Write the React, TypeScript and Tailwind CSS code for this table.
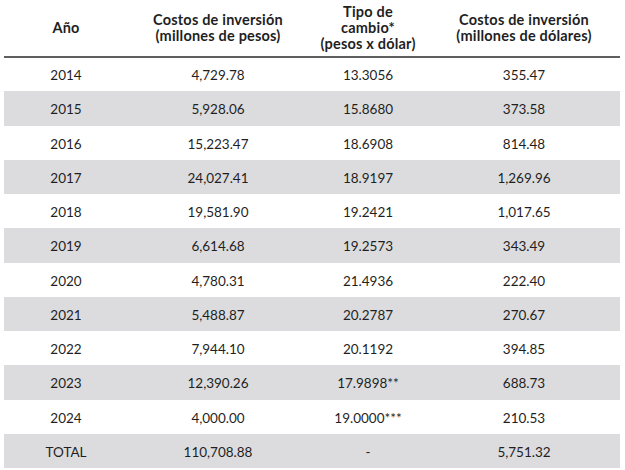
import React from 'react'

const rows: [string, string, string, string][] = [
  ['2014', '4,729.78', '13.3056', '355.47'],
  ['2015', '5,928.06', '15.8680', '373.58'],
  ['2016', '15,223.47', '18.6908', '814.48'],
  ['2017', '24,027.41', '18.9197', '1,269.96'],
  ['2018', '19,581.90', '19.2421', '1,017.65'],
  ['2019', '6,614.68', '19.2573', '343.49'],
  ['2020', '4,780.31', '21.4936', '222.40'],
  ['2021', '5,488.87', '20.2787', '270.67'],
  ['2022', '7,944.10', '20.1192', '394.85'],
  ['2023', '12,390.26', '17.9898**', '688.73'],
  ['2024', '4,000.00', '19.0000***', '210.53'],
  ['TOTAL', '110,708.88', '-', '5,751.32'],
]

export default function App() {
  return (
    <div className="w-[625px] h-[470px] bg-white pl-[4px] pr-[5px] font-['Lato',sans-serif] text-[#1f1f1f]">
      <table className="w-full border-collapse table-fixed">
        <colgroup>
          <col className="w-[124px]" />
          <col className="w-[180px]" />
          <col className="w-[120px]" />
          <col />
        </colgroup>
        <thead>
          <tr className="h-[57px] border-b-2 border-[#5f5f5f] text-[14.5px] font-bold leading-[16px] tracking-[0.2px]">
            <th className="text-center align-middle">Año</th>
            <th className="text-center align-middle">
              Costos de inversión
              <br />
              (millones de pesos)
            </th>
            <th className="text-center align-middle">
              Tipo de
              <br />
              cambio*
              <br />
              (pesos x dólar)
            </th>
            <th className="text-center align-middle">
              Costos de inversión
              <br />
              (millones de dólares)
            </th>
          </tr>
        </thead>
        <tbody className="text-[13.5px]">
          {rows.map((r, i) => (
            <tr
              key={r[0]}
              className={`${i === 1 || i === 5 || i === 9 ? 'h-[35px]' : 'h-[34px]'} ${i % 2 === 1 ? 'bg-[#dcdcde]' : 'bg-white'}`}
            >
              {r.map((cell, j) => (
                <td key={j} className="text-center align-middle pt-[2px]">
                  {cell}
                </td>
              ))}
            </tr>
          ))}
        </tbody>
      </table>
    </div>
  )
}
